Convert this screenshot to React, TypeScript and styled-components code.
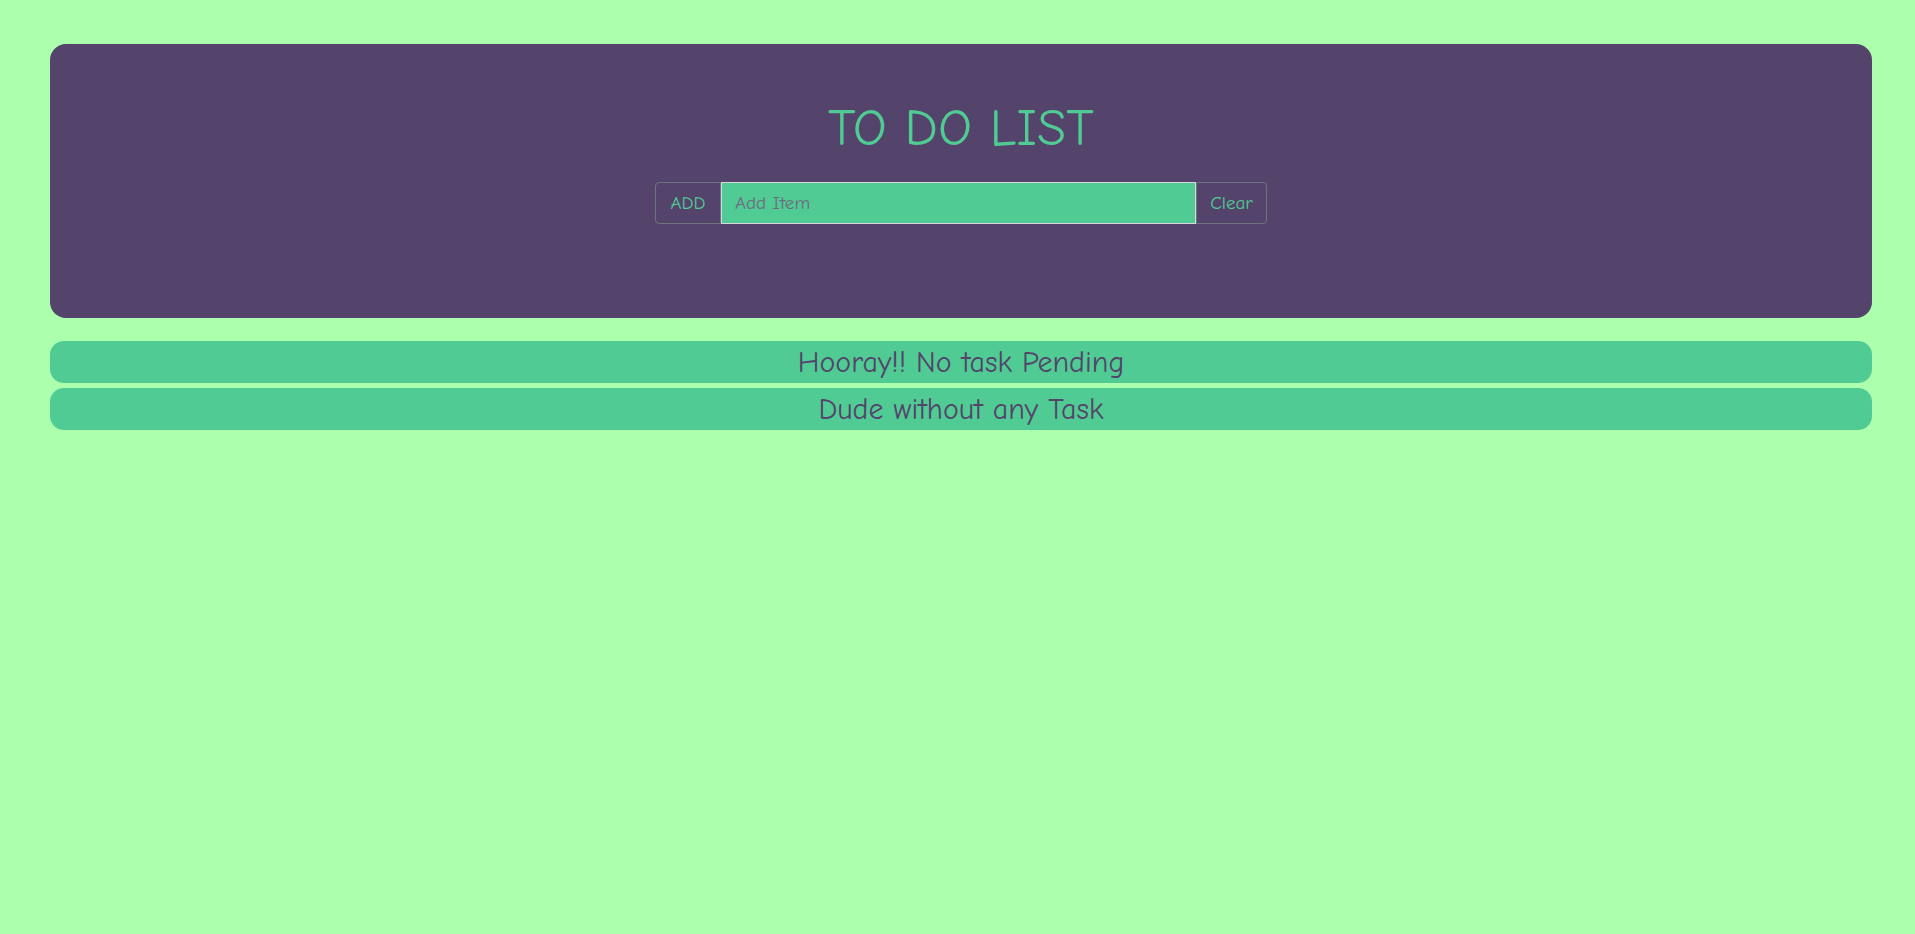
import React from "react";
import styled, { createGlobalStyle } from "styled-components";

const Global = createGlobalStyle`
  html, body { margin: 0; padding: 0; }
  body {
    background: #acffad;
    font-family: "Comic Sans MS", "Comic Neue", "DejaVu Sans", sans-serif;
    min-height: 934px;
  }
`;

const Page = styled.div`
  padding: 44px 43px 0 50px;
  display: flex;
  flex-direction: column;
`;

const Header = styled.header`
  background: #54436b;
  border-radius: 16px;
  height: 274px;
  box-sizing: border-box;
  padding-top: 59px;
  display: flex;
  flex-direction: column;
  align-items: center;
`;

const Title = styled.h1`
  margin: 0;
  font-size: 53px;
  font-weight: 400;
  line-height: 50px;
  color: #50cb93;
`;

const InputGroup = styled.div`
  margin-top: 29px;
  display: flex;
  width: 612px;
  height: 42px;
`;

const SideButton = styled.button<{ $side: "left" | "right"; $w: number }>`
  background: transparent;
  color: #50cb93;
  font-family: inherit;
  font-size: 19px;
  border: 1px solid #6c757d;
  border-radius: ${(p) => (p.$side === "left" ? "4px 0 0 4px" : "0 4px 4px 0")};
  width: ${(p) => p.$w}px;
  padding: 0;
  height: 100%;
  cursor: pointer;
`;

const ItemInput = styled.input`
  flex: 1;
  min-width: 0;
  height: 100%;
  box-sizing: border-box;
  background: #50cb93;
  border: 1px solid #d8d8e0;
  font-family: inherit;
  font-size: 19px;
  padding: 0 13px;
  color: #54436b;
  outline: none;
  &::placeholder { color: #6f6a82; }
`;

const List = styled.div`
  margin-top: 23px;
  display: flex;
  flex-direction: column;
  gap: 5px;
`;

const Item = styled.div`
  background: #50cb93;
  border-radius: 14px;
  height: 42px;
  display: flex;
  align-items: center;
  justify-content: center;
  color: #54436b;
  font-size: 30px;
`;

export default function App() {
  return (
    <>
      <Global />
      <Page>
        <Header>
          <Title>TO DO LIST</Title>
          <InputGroup>
            <SideButton $side="left" $w={66}>ADD</SideButton>
            <ItemInput placeholder="Add Item" />
            <SideButton $side="right" $w={71}>Clear</SideButton>
          </InputGroup>
        </Header>
        <List>
          <Item>Hooray!! No task Pending</Item>
          <Item>Dude without any Task</Item>
        </List>
      </Page>
    </>
  );
}
